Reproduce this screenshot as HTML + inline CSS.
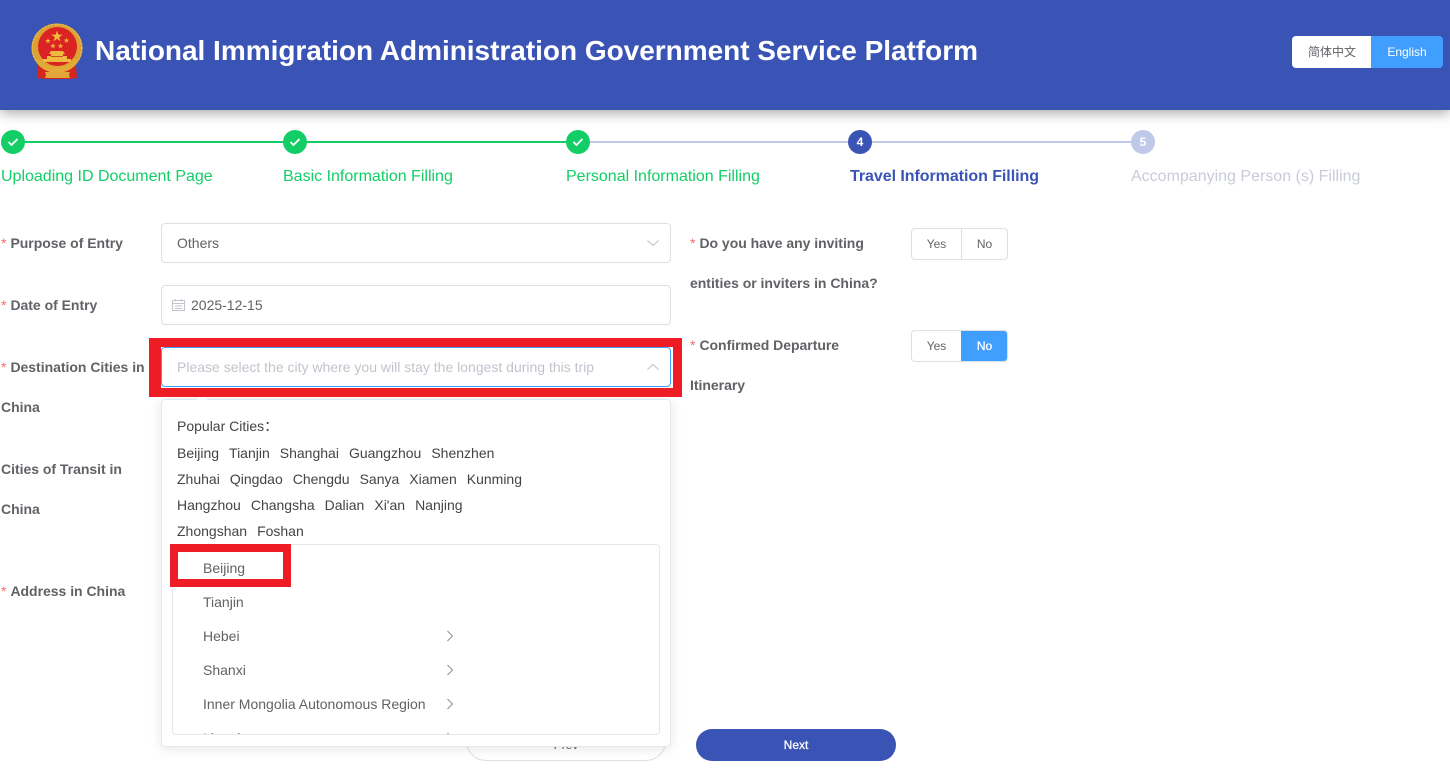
<!DOCTYPE html>
<html lang="en"><head><meta charset="utf-8"><title>National Immigration Administration</title>
<style>
*{box-sizing:border-box}
html,body{margin:0;padding:0;width:1450px;height:770px;overflow:hidden;background:#fff;font-family:"Liberation Sans","Noto Sans CJK SC",sans-serif}
.a{position:absolute;white-space:nowrap}
.hd{position:absolute;left:0;top:0;width:1450px;height:110px;background:#3a54b6;box-shadow:0 3px 12px rgba(0,0,0,.35)}
.title{left:95px;top:34px;font-size:28px;line-height:34px;font-weight:700;color:#fff;letter-spacing:-.02px}
.lang{top:36px;height:32px;font-size:12px;line-height:32px;text-align:center}
.step{font-size:16px;line-height:20px;top:165px}
.line{position:absolute;height:2px;top:141px}
.dot{position:absolute;top:130px;width:24px;height:24px;border-radius:50%;text-align:center;color:#fff;font-size:12px;font-weight:700;line-height:24px}
.dot svg{position:absolute;left:6px;top:7px}
.g{color:#13ce66}
.lb{font-size:14px;font-weight:700;color:#606266;line-height:20px;letter-spacing:-.02px}
.lb i{font-style:normal;font-weight:400;color:#f56c6c;margin-right:4px}
.ip{position:absolute;left:161px;width:510px;height:40px;border:1px solid #dcdfe6;border-radius:4px;background:#fff;font-size:14px;line-height:38px;color:#606266}
.rb{position:absolute;left:911px;width:97px;height:32px;border:1px solid #dcdfe6;border-radius:4px;font-size:12px;line-height:30px;color:#606266;overflow:hidden;background:#fff}
.rb span{position:absolute;top:0;height:30px;text-align:center}
.rb .y{left:0;width:49px}
.rb .n{left:49px;width:46px;border-left:1px solid #dcdfe6}
.rb .on{background:#409eff;color:#fff;border-left:0;left:49px;top:-1px;height:32px;width:47px;line-height:32px;-webkit-text-stroke:.25px #fff}
.pop{position:absolute;left:161px;top:399px;width:510px;height:348px;background:#fff;border:1px solid #e4e7ed;border-radius:4px;box-shadow:0 2px 12px rgba(0,0,0,.1)}
.c{font-size:14px;line-height:20px;color:#444;left:177px}
.c span{margin-right:10px}
.cas{position:absolute;left:172px;top:544px;width:488px;height:191px;border:1px solid #e4e7ed;border-radius:4px;background:#fff;overflow:hidden}
.it{position:absolute;left:30px;font-size:14px;line-height:20px;color:#606266;white-space:nowrap}
.cv{position:absolute;left:273px}
.red{position:absolute;border:8px solid #ee1c25;z-index:2}
</style></head><body>
<div class="hd"></div>
<svg class="a" style="left:30px;top:23px" width="54" height="58" viewBox="0 0 54 58">
<path d="M8 42L7 55l8 1h24l8-1-1-13z" fill="#d3261f"/>
<ellipse cx="27" cy="25" rx="25.500" ry="24.500" fill="#dca034"/>
<ellipse cx="27" cy="25" rx="24.800" ry="23.800" fill="none" stroke="#edc04e" stroke-width="1.300" stroke-dasharray="2 1.500"/>
<circle cx="27.500" cy="23.500" r="19.500" fill="#dc2323"/>
<polygon transform="translate(27,13.500) scale(6)" points="0,-1 .22,-.31 .95,-.31 .36,.12 .59,.81 0,.38 -.59,.81 -.36,.12 -.95,-.31 -.22,-.31" fill="#f0bf3c"/>
<g fill="#efb93a">
<polygon transform="translate(18,18) scale(3)" points="0,-1 .22,-.31 .95,-.31 .36,.12 .59,.81 0,.38 -.59,.81 -.36,.12 -.95,-.31 -.22,-.31"/>
<polygon transform="translate(36.500,17.500) scale(3)" points="0,-1 .22,-.31 .95,-.31 .36,.12 .59,.81 0,.38 -.59,.81 -.36,.12 -.95,-.31 -.22,-.31"/>
<polygon transform="translate(23,23) scale(3)" points="0,-1 .22,-.31 .95,-.31 .36,.12 .59,.81 0,.38 -.59,.81 -.36,.12 -.95,-.31 -.22,-.31"/>
<polygon transform="translate(30.500,23) scale(3)" points="0,-1 .22,-.31 .95,-.31 .36,.12 .59,.81 0,.38 -.59,.81 -.36,.12 -.95,-.31 -.22,-.31"/>
</g>
<path d="M21 28h12l2 3h-2v2h4v3h4v3H13v-3h4v-3h4v-2h-2z" fill="#eeb93f"/>
<path d="M21 33h12v1H21z" fill="#c9501f"/>
<path d="M9 36c4 5 11 8 18 8s14-3 18-8l3 2c-3 7-12 12-21 12S9 45 6 38z" fill="#e2aa37"/>
<path d="M15 49h25l-1 3 1 3H15l1-3z" fill="#e1a63a"/>
</svg>
<div class="a title">National Immigration Administration Government Service Platform</div>
<div class="a lang" style="left:1292px;width:79px;padding-left:1px;background:#fff;color:#606266;border-radius:4px 0 0 4px">简体中文</div>
<div class="a lang" style="left:1371px;width:72px;background:#409eff;color:#fff;border-radius:0 4px 4px 0">English</div>

<div class="line" style="left:24px;width:259px;background:#13ce66"></div>
<div class="line" style="left:307px;width:259px;background:#13ce66"></div>
<div class="line" style="left:590px;width:258px;background:#c0c9e8"></div>
<div class="line" style="left:872px;width:259px;background:#c0c9e8"></div>
<div class="dot" style="left:1px;background:#13ce66"><svg width="12" height="10" viewBox="0 0 12 10"><path d="M1.500 5l3 3 6-6" fill="none" stroke="#fff" stroke-width="1.800"/></svg></div>
<div class="dot" style="left:283px;background:#13ce66"><svg width="12" height="10" viewBox="0 0 12 10"><path d="M1.500 5l3 3 6-6" fill="none" stroke="#fff" stroke-width="1.800"/></svg></div>
<div class="dot" style="left:566px;background:#13ce66"><svg width="12" height="10" viewBox="0 0 12 10"><path d="M1.500 5l3 3 6-6" fill="none" stroke="#fff" stroke-width="1.800"/></svg></div>
<div class="dot" style="left:848px;background:#3a54b6">4</div>
<div class="dot" style="left:1131px;background:#c0c9e8">5</div>
<div class="a step g" style="left:1px;top:167px">Uploading ID Document Page</div>
<div class="a step g" style="left:283px;top:167px">Basic Information Filling</div>
<div class="a step g" style="left:566px;top:167px">Personal Information Filling</div>
<div class="a step" style="left:850px;top:167px;color:#3a54b6;font-weight:700;letter-spacing:-.05px">Travel Information Filling</div>
<div class="a step" style="left:1131px;top:167px;color:#c8ccd8">Accompanying Person (s) Filling</div>

<div class="a lb" style="left:1px;top:233px"><i>*</i>Purpose of Entry</div>
<div class="a lb" style="left:1px;top:295px"><i>*</i>Date of Entry</div>
<div class="a lb" style="left:1px;top:357px"><i>*</i>Destination Cities in</div>
<div class="a lb" style="left:1px;top:397px">China</div>
<div class="a lb" style="left:1px;top:459px">Cities of Transit in</div>
<div class="a lb" style="left:1px;top:499px">China</div>
<div class="a lb" style="left:1px;top:581px"><i>*</i>Address in China</div>

<div class="ip" style="top:223px;padding-left:15px">Others
<svg style="position:absolute;left:485px;top:15px" width="12" height="8" viewBox="0 0 12 8"><path d="M.5 1.500L6 6.500l5.500-5" fill="none" stroke="#c0c4cc" stroke-width="1.100"/></svg></div>
<div class="ip" style="top:285px;padding-left:29px">2025-12-15
<svg style="position:absolute;left:10px;top:12px" width="13" height="14" viewBox="0 0 13 14"><path d="M.5 2.500h12v10H.5zM.5 5.500h12M3.500 1v2.500M9.500 1v2.500M3 8h7M3 10.500h7" fill="none" stroke="#c0c4cc" stroke-width="1"/></svg></div>
<div class="red" style="left:149px;top:338px;width:533px;height:59px;border-width:9px 9px 9px 12px;background:#fff"></div>
<div class="ip" style="top:347px;padding-left:15px;border-color:#409eff;color:#c0c4cc;z-index:3">Please select the city where you will stay the longest during this trip
<svg style="position:absolute;left:485px;top:15px" width="12" height="8" viewBox="0 0 12 8"><path d="M.5 6.500L6 1.500l5.500 5" fill="none" stroke="#c0c4cc" stroke-width="1.100"/></svg></div>

<div class="a lb" style="left:690px;top:233px"><i>*</i>Do you have any inviting</div>
<div class="a lb" style="left:690px;top:273px">entities or inviters in China?</div>
<div class="a lb" style="left:690px;top:335px"><i>*</i>Confirmed Departure</div>
<div class="a lb" style="left:690px;top:375px">Itinerary</div>
<div class="rb" style="top:228px"><span class="y">Yes</span><span class="n">No</span></div>
<div class="rb" style="top:330px"><span class="y">Yes</span><span class="n on">No</span></div>

<div class="a" style="left:466px;top:720px;width:200px;height:41px;border:1px solid #dcdfe6;border-radius:20px;background:#fff;font-size:12px;color:#606266;text-align:center;line-height:48px">Prev</div>
<div class="a" style="left:696px;top:729px;width:200px;height:32px;background:#3a54b6;border-radius:16px;color:#fff;font-size:12px;text-align:center;line-height:32px;-webkit-text-stroke:.25px #fff">Next</div>

<div class="pop"></div>
<svg class="a" style="left:196px;top:395px" width="12" height="6" viewBox="0 0 12 6"><path d="M0 5.500L6 0l6 5.500z" fill="#fff"/></svg>
<div class="a c" style="top:416px">Popular Cities：</div>
<div class="a c" style="top:443px"><span>Beijing</span><span>Tianjin</span><span>Shanghai</span><span>Guangzhou</span><span>Shenzhen</span></div>
<div class="a c" style="top:469px"><span>Zhuhai</span><span>Qingdao</span><span>Chengdu</span><span>Sanya</span><span>Xiamen</span><span>Kunming</span></div>
<div class="a c" style="top:495px"><span>Hangzhou</span><span>Changsha</span><span>Dalian</span><span>Xi'an</span><span>Nanjing</span></div>
<div class="a c" style="top:521px"><span>Zhongshan</span><span>Foshan</span></div>
<div class="cas">
<div class="it" style="top:13px">Beijing</div>
<div class="it" style="top:47px">Tianjin</div>
<div class="it" style="top:81px">Hebei</div>
<svg class="cv" style="top:85px" width="8" height="12" viewBox="0 0 8 12"><path d="M1.500 1l5 5-5 5" fill="none" stroke="#8c8f96" stroke-width="1"/></svg>
<div class="it" style="top:115px">Shanxi</div>
<svg class="cv" style="top:119px" width="8" height="12" viewBox="0 0 8 12"><path d="M1.500 1l5 5-5 5" fill="none" stroke="#8c8f96" stroke-width="1"/></svg>
<div class="it" style="top:149px">Inner Mongolia Autonomous Region</div>
<svg class="cv" style="top:153px" width="8" height="12" viewBox="0 0 8 12"><path d="M1.500 1l5 5-5 5" fill="none" stroke="#8c8f96" stroke-width="1"/></svg>
<div class="it" style="top:183px">Liaoning</div>
<svg class="cv" style="top:187px" width="8" height="12" viewBox="0 0 8 12"><path d="M1.500 1l5 5-5 5" fill="none" stroke="#8c8f96" stroke-width="1"/></svg>
</div>
<div class="red" style="left:170px;top:544px;width:121px;height:43px"></div>
</body></html>
